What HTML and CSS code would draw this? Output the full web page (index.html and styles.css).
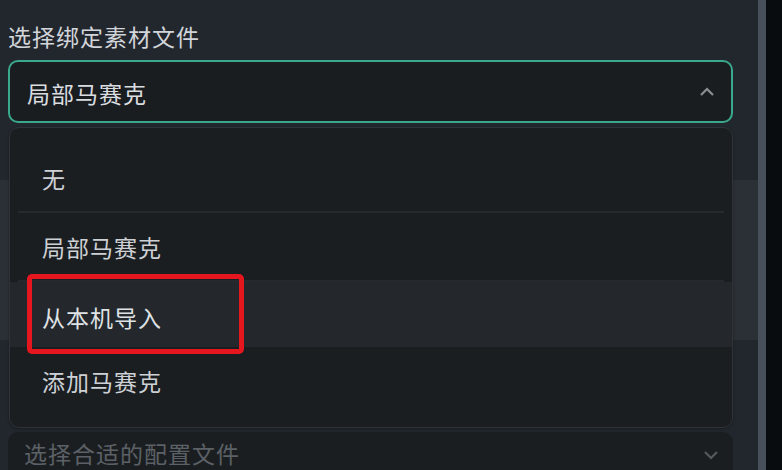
FILE: index.html
```html
<!DOCTYPE html>
<html lang="zh-CN">
<head>
<meta charset="utf-8">
<link rel="stylesheet" href="styles.css">
</head>
<body>
<div class="app">
  <div class="panel">
    <div class="label">选择绑定素材文件</div>
    <div class="select open">
      <span class="value">局部马赛克</span>
      <svg class="chev" width="16" height="10" viewBox="0 0 16 10"><path d="M2 8 L8 2 L14 8" fill="none" stroke="#8a8e92" stroke-width="2.2"/></svg>
    </div>
    <div class="band"></div>
    <div class="select second">
      <span class="placeholder">选择合适的配置文件</span>
      <svg class="chev" width="16" height="10" viewBox="0 0 16 10"><path d="M2 2 L8 8 L14 2" fill="none" stroke="#54595e" stroke-width="2.2"/></svg>
    </div>

    <div class="dropdown">
      <div class="item">无</div>
      <div class="sep"></div>
      <div class="item">局部马赛克</div>
      <div class="sep"></div>
      <div class="item hover">从本机导入</div>
      <div class="item">添加马赛克</div>
      <div class="mark"></div>
    </div>
  </div>
  <div class="scrollbar"></div>
  <div class="edge"></div>
</div>
</body>
</html>
```
FILE: styles.css
```css
html, body {
  margin: 0;
  padding: 0;
  width: 782px;
  height: 470px;
  overflow: hidden;
  background: #22272e;
  font-family: "Noto Sans CJK SC", "Noto Sans", sans-serif;
}

.app {
  display: flex;
  width: 782px;
  height: 470px;
}

.panel {
  position: relative;
  width: 758px;
  padding: 20px 25px 0 8px;
  box-sizing: border-box;
  display: flex;
  flex-direction: column;
}

.label {
  font-size: 23px;
  line-height: 32px;
  height: 32px;
  color: #d2d5d9;
  letter-spacing: 1px;
}

.select {
  margin-top: 8px;
  height: 63px;
  box-sizing: border-box;
  border-radius: 10px;
  background: #1a1d20;
  display: flex;
  align-items: center;
  justify-content: space-between;
  padding: 0 16px 0 17px;
  flex-shrink: 0;
}

.select.open {
  border: 2px solid #3aa88c;
}

.value {
  font-size: 23px;
  color: #dadde0;
  letter-spacing: 1px;
  margin-top: 2px;
}

.band {
  margin: 57px -25px 0 -8px;
  height: 160px;
  background: #2b3036;
  flex-shrink: 0;
}

.select.second {
  margin-top: 92px;
  padding: 0 14px 0 16px;
  background: #1b1e21;
  align-items: flex-start;
  padding-top: 4px;
}

.placeholder {
  font-size: 23px;
  color: #5b6166;
  letter-spacing: 1px;
}

.select.second .chev {
  margin-top: 14px;
}

.dropdown {
  position: absolute;
  top: 127px;
  left: 9px;
  width: 724px;
  height: 301px;
  box-sizing: border-box;
  border: 1px solid #2f3439;
  border-radius: 10px;
  background: #1b1e21;
  padding-top: 16px;
  display: flex;
  flex-direction: column;
  box-shadow: 0 1px 3px rgba(0, 0, 0, 0.3);
}

.item {
  height: 67px;
  display: flex;
  align-items: center;
  padding-left: 32px;
  font-size: 23px;
  color: #cdd1d5;
  letter-spacing: 1px;
  flex-shrink: 0;
}

.item.hover {
  height: 65px;
  background: #24282d;
  color: #dfe2e5;
  padding-top: 4px;
  box-sizing: border-box;
}

.sep {
  height: 2px;
  margin: 0 8px;
  background: #262a2f;
  flex-shrink: 0;
}

.mark {
  position: absolute;
  left: 17px;
  top: 146px;
  width: 217px;
  height: 80px;
  box-sizing: border-box;
  border: 5px solid #e5161e;
  border-radius: 5px;
}

.scrollbar {
  width: 8px;
  background: #47505a;
}

.edge {
  flex: 1;
  background: #090c0f;
}
```
